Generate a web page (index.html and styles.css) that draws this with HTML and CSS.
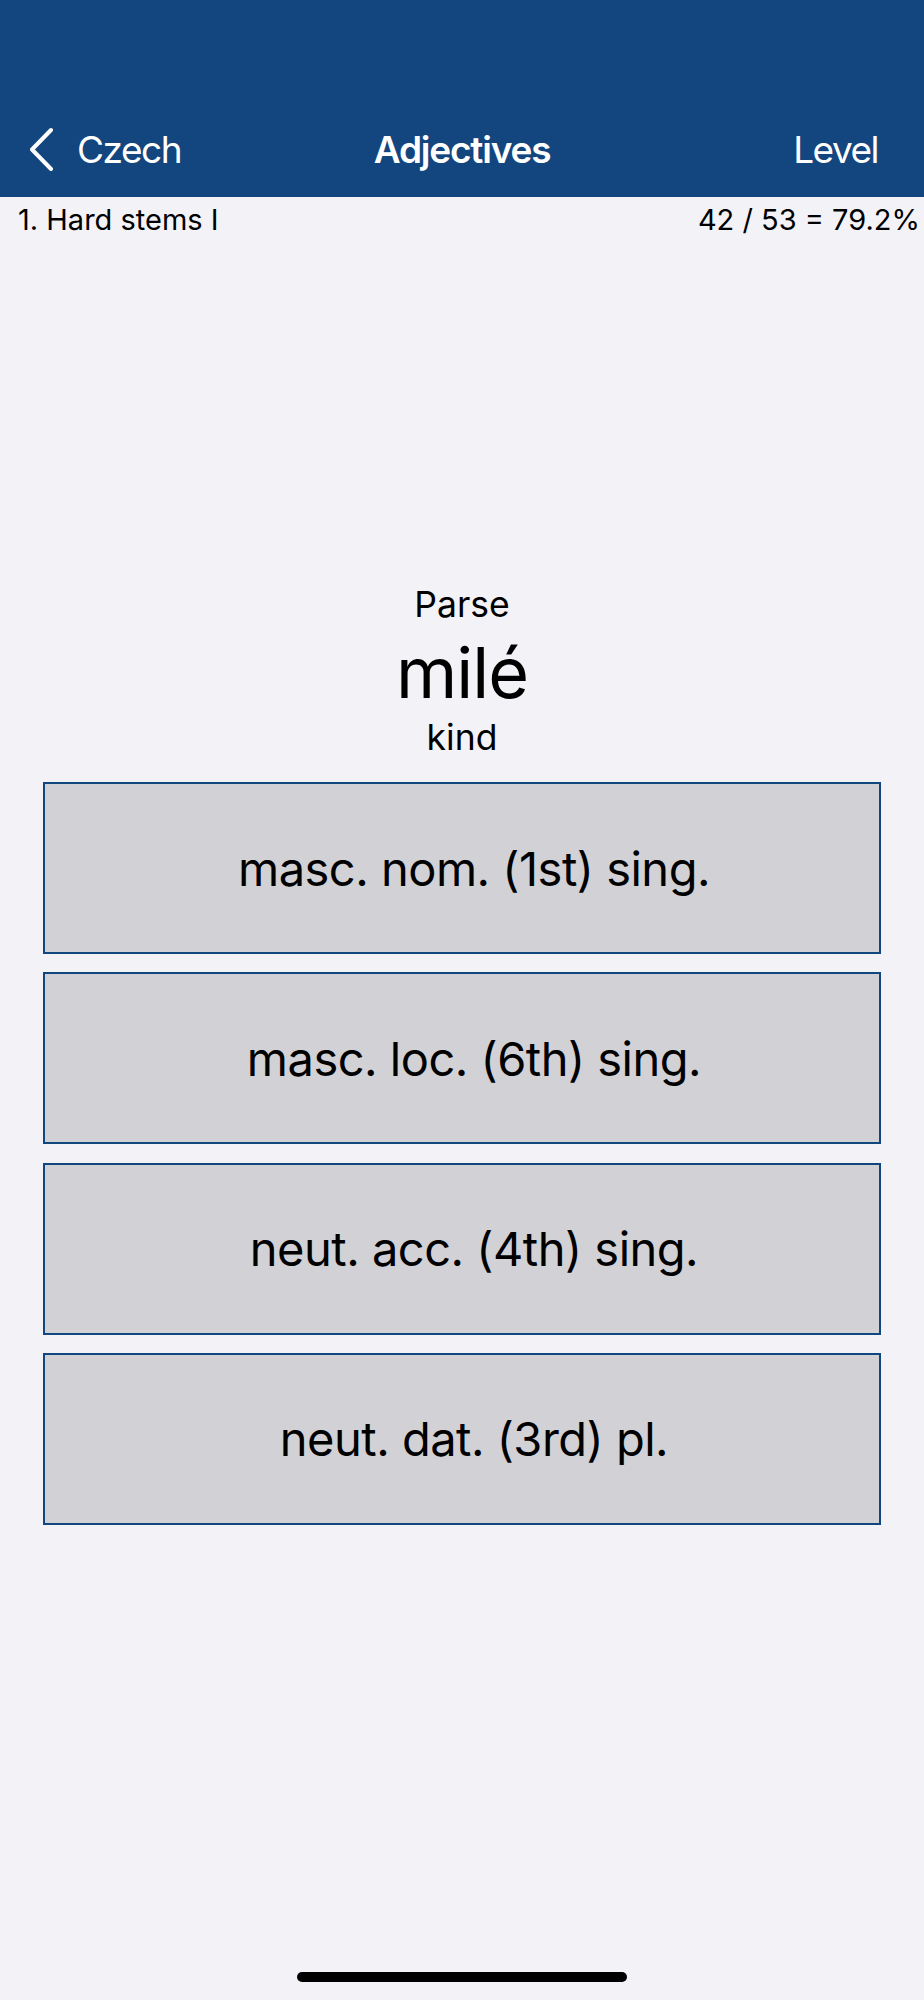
FILE: index.html
```html
<!DOCTYPE html>
<html lang="en">
<head>
<meta charset="utf-8">
<title>Adjectives</title>
<link rel="stylesheet" href="styles.css">
</head>
<body>
<div class="screen">
  <header class="navbar">
    <div class="nav-row">
      <a class="back" href="#">
        <svg class="chevron" width="30" height="44" viewBox="0 0 30 44" aria-hidden="true">
          <path d="M24 3 L5 22.5 L24 42" fill="none" stroke="#ffffff" stroke-width="4" stroke-linecap="round" stroke-linejoin="round"/>
        </svg>
        <span>Czech</span>
      </a>
      <h1 class="title">Adjectives</h1>
      <a class="level" href="#">Level</a>
    </div>
  </header>
  <div class="subbar">
    <span class="lesson">1. Hard stems I</span>
    <span class="score">42 / 53 = 79.2%</span>
  </div>
  <main class="quiz">
    <div class="prompt">Parse</div>
    <div class="word">milé</div>
    <div class="gloss">kind</div>
    <div class="choices">
      <button class="choice">masc. nom. (1st) sing.</button>
      <button class="choice">masc. loc. (6th) sing.</button>
      <button class="choice">neut. acc. (4th) sing.</button>
      <button class="choice">neut. dat. (3rd) pl.</button>
    </div>
  </main>
  <div class="home-area"><div class="home-indicator"></div></div>
</div>
</body>
</html>
```

FILE: styles.css
```css
* { box-sizing: border-box; }
html, body {
  margin: 0;
  padding: 0;
  background: #f2f2f7;
}
body {
  font-family: Inter, "Liberation Sans", Arial, sans-serif;
  color: #000;
}
.screen {
  width: 924px;
  min-height: 2000px;
  display: flex;
  flex-direction: column;
}
.navbar {
  background: #13457e;
  height: 197px;
  padding-top: 101px;
}
.nav-row {
  height: 96px;
  display: grid;
  grid-template-columns: 1fr auto 1fr;
  align-items: center;
  color: #fff;
  font-size: 37px;
  padding: 0 27px;
}
.back {
  justify-self: start;
  display: flex;
  align-items: center;
  gap: 20px;
  color: #fff;
  text-decoration: none;
  letter-spacing: -1.5px;
}
.chevron { display: block; }
.title {
  margin: 0;
  font-size: 37px;
  font-weight: 600;
  letter-spacing: -1.2px;
}
.level {
  justify-self: end;
  margin-right: 19px;
  color: #fff;
  text-decoration: none;
  letter-spacing: -1.5px;
}
.subbar {
  display: flex;
  justify-content: space-between;
  padding: 5px 4px 0 18px;
  font-size: 29px;
  line-height: 36px;
}
.quiz {
  padding-top: 347px;
  display: flex;
  flex-direction: column;
  align-items: center;
}
.prompt {
  font-size: 35.5px;
  line-height: 40px;
}
.word {
  margin-top: 8px;
  font-size: 70px;
  line-height: 80px;
  letter-spacing: -1px;
}
.gloss {
  margin-top: 5px;
  font-size: 35.5px;
  line-height: 40px;
}
.choices {
  margin-top: 24px;
  width: 838px;
  display: flex;
  flex-direction: column;
  gap: 18.3px;
}
.choice {
  height: 172px;
  width: 100%;
  background: #d1d1d6;
  border: 2px solid #12467f;
  font-family: inherit;
  font-size: 47px;
  color: #000;
  letter-spacing: -0.5px;
  padding: 0 0 0 24px;
}
.home-area {
  margin-top: auto;
  height: 28px;
  display: flex;
  justify-content: center;
}
.home-indicator {
  width: 330px;
  height: 10px;
  border-radius: 5px;
  background: #000;
}
```
